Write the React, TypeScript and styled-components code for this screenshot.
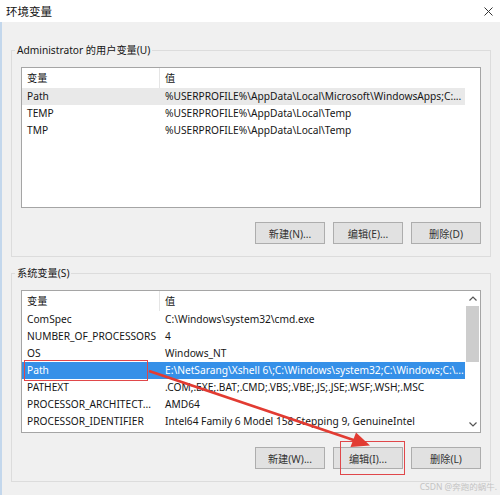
import styled, { createGlobalStyle } from "styled-components";

type Row = { name: string; value: string; state?: "active" | "inactive" };

const userVars: Row[] = [
  { name: "Path", value: "%USERPROFILE%\\AppData\\Local\\Microsoft\\WindowsApps;C:...", state: "inactive" },
  { name: "TEMP", value: "%USERPROFILE%\\AppData\\Local\\Temp" },
  { name: "TMP", value: "%USERPROFILE%\\AppData\\Local\\Temp" },
];

const systemVars: Row[] = [
  { name: "ComSpec", value: "C:\\Windows\\system32\\cmd.exe" },
  { name: "NUMBER_OF_PROCESSORS", value: "4" },
  { name: "OS", value: "Windows_NT" },
  { name: "Path", value: "E:\\NetSarang\\Xshell 6\\;C:\\Windows\\system32;C:\\Windows;C:\\...", state: "active" },
  { name: "PATHEXT", value: ".COM;.EXE;.BAT;.CMD;.VBS;.VBE;.JS;.JSE;.WSF;.WSH;.MSC" },
  { name: "PROCESSOR_ARCHITECT...", value: "AMD64" },
  { name: "PROCESSOR_IDENTIFIER", value: "Intel64 Family 6 Model 158 Stepping 9, GenuineIntel" },
];

const VarList = ({ rows, height, scroll }: { rows: Row[]; height: number; scroll?: boolean }) => (
  <ListView $height={height}>
    <Table>
      <HeadRow>
        <HeadCell $divider>变量</HeadCell>
        <HeadCell>值</HeadCell>
      </HeadRow>
      {rows.map((r) => (
        <DataRow key={r.name} $state={r.state}>
          <Cell>{r.name}</Cell>
          <Cell>{r.value}</Cell>
        </DataRow>
      ))}
    </Table>
    <ScrollBar>
      {scroll && (
        <>
          <Arrow>
            <svg width="8" height="5" viewBox="0 0 8 5">
              <polyline points="0.5,4.5 4,1 7.5,4.5" fill="none" stroke="#555" strokeWidth="1.2" />
            </svg>
          </Arrow>
          <Thumb />
          <Track />
          <Arrow>
            <svg width="8" height="5" viewBox="0 0 8 5">
              <polyline points="0.5,0.5 4,4 7.5,0.5" fill="none" stroke="#555" strokeWidth="1.2" />
            </svg>
          </Arrow>
        </>
      )}
    </ScrollBar>
  </ListView>
);

const App = () => {
  return (
    <>
      <GlobalStyle />
      <Window>
        <TitleBar>
          <Title>环境变量</Title>
          <svg width="9" height="9" viewBox="0 0 9 9">
            <path d="M0.5 0.5L8.5 8.5M8.5 0.5L0.5 8.5" stroke="#333" strokeWidth="1" />
          </svg>
        </TitleBar>
        <Body>
          <GroupBox>
            <Legend>Administrator 的用户变量(U)</Legend>
            <VarList rows={userVars} height={141} />
            <ButtonRow>
              <Button>新建(N)...</Button>
              <Button>编辑(E)...</Button>
              <Button>删除(D)</Button>
            </ButtonRow>
          </GroupBox>
          <GroupBox $top={8}>
            <Legend>系统变量(S)</Legend>
            <VarList rows={systemVars} height={143} scroll />
            <ButtonRow>
              <Button>新建(W)...</Button>
              <Button>编辑(I)...</Button>
              <Button>删除(L)</Button>
            </ButtonRow>
          </GroupBox>
        </Body>

        <Mark style={{ left: 24, top: 360, width: 124, height: 21 }} />
        <Mark style={{ left: 340, top: 441, width: 65, height: 34 }} />
        <Annotation width="500" height="495" viewBox="0 0 500 495">
          <line x1="149" y1="371" x2="355" y2="440.5" stroke="#e23b32" strokeWidth="2.8" />
          <polygon points="370,445.5 350.5,447 356,432.5" fill="#e23b32" />
        </Annotation>
        <Watermark>CSDN @奔跑的蜗牛.</Watermark>
      </Window>
    </>
  );
};

const GlobalStyle = createGlobalStyle`
  html, body {
    margin: 0;
    padding: 0;
    background: #f0f0f0;
  }
  body {
    font-family: "Noto Sans", "Noto Sans CJK SC", sans-serif;
    font-size: 10.2px;
    color: #161616;
  }
`;

const Window = styled.div`
  position: relative;
  width: 500px;
  height: 495px;
  overflow: hidden;
  background: #f0f0f0;
`;

const TitleBar = styled.div`
  height: 22px;
  background: #fff;
  display: flex;
  align-items: center;
  justify-content: space-between;
  padding: 0 7px 0 6px;
  box-sizing: border-box;
`;

const Title = styled.span`
  font-size: 11.5px;
  color: #111;
`;

const Body = styled.div`
  height: 473px;
  box-sizing: border-box;
  border-left: 2px solid #c3d7ec;
  padding: 20px 9px 0 9px;
`;

const GroupBox = styled.fieldset<{ $top?: number }>`
  margin: ${(p) => p.$top ?? 0}px 0 0 0;
  padding: 9px 9px 12px;
  border: 1px solid #dcdcdc;
  min-width: 0;
`;

const Legend = styled.legend`
  padding: 0 2px;
  margin-left: -6px;
  line-height: 16px;
  font-size: 10.2px;
`;

const ListView = styled.div<{ $height: number }>`
  height: ${(p) => p.$height}px;
  box-sizing: border-box;
  border: 1px solid #a5a5a5;
  background: #fff;
  display: flex;
`;

const Table = styled.div`
  flex: 1;
  min-width: 0;
`;

const HeadRow = styled.div`
  display: grid;
  grid-template-columns: 138px 1fr;
  height: 20px;
  line-height: 20px;
`;

const HeadCell = styled.div<{ $divider?: boolean }>`
  padding-left: 5px;
  border-right: ${(p) => (p.$divider ? "1px solid #e5e5e5" : "none")};
`;

const DataRow = styled.div<{ $state?: "active" | "inactive" }>`
  display: grid;
  grid-template-columns: 138px 1fr;
  height: 17px;
  line-height: 17px;
  background: ${(p) => (p.$state === "active" ? "#3590e8" : p.$state === "inactive" ? "#e9e9e9" : "transparent")};
  color: ${(p) => (p.$state === "active" ? "#fff" : "inherit")};
`;

const Cell = styled.div`
  padding-left: 5px;
  white-space: nowrap;
  overflow: hidden;
`;

const ScrollBar = styled.div`
  width: 15px;
  display: flex;
  flex-direction: column;
`;

const Arrow = styled.div`
  height: 15px;
  display: flex;
  align-items: center;
  justify-content: center;
`;

const Thumb = styled.div`
  height: 56px;
  margin: 0 1px;
  background: #cdcdcd;
`;

const Track = styled.div`
  flex: 1;
`;

const ButtonRow = styled.div`
  display: flex;
  justify-content: flex-end;
  gap: 8px;
  margin-top: 14px;
`;

const Button = styled.button`
  width: 70px;
  height: 22px;
  padding: 0;
  border: 1px solid #adadad;
  background: #e1e1e1;
  font-family: inherit;
  font-size: 10.2px;
  color: #333;
`;

const Mark = styled.div`
  position: absolute;
  border: 1px solid #e0474a;
  box-sizing: border-box;
  pointer-events: none;
`;

const Annotation = styled.svg`
  position: absolute;
  left: 0;
  top: 0;
  pointer-events: none;
`;

const Watermark = styled.div`
  position: absolute;
  right: 3px;
  bottom: 3px;
  font-size: 8.5px;
  color: #c4c4c4;
`;

export default App;
